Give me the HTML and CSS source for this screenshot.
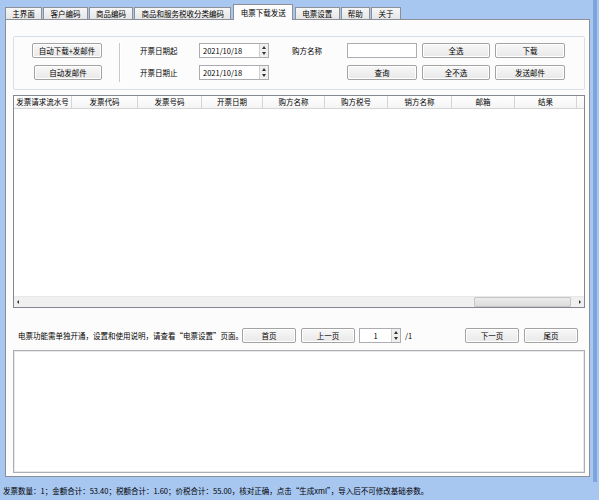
FILE: index.html
```html
<!DOCTYPE html>
<html lang="zh-CN">
<head>
<meta charset="utf-8">
<title>电票下载发送</title>
<link rel="stylesheet" href="styles.css">
</head>
<body>
<div class="window">
  <div class="top">
    <div class="left">
      <div class="tabs">
        <div class="tab">主界面</div>
        <div class="tab">客户编码</div>
        <div class="tab">商品编码</div>
        <div class="tab">商品和服务税收分类编码</div>
        <div class="tab active">电票下载发送</div>
        <div class="tab">电票设置</div>
        <div class="tab">帮助</div>
        <div class="tab">关于</div>
      </div>
      <div class="panel">
        <div class="group">
          <div class="col-auto">
            <div class="btn w70">自动下载+发邮件</div>
            <div class="btn w68">自动发邮件</div>
          </div>
          <div class="vsep"></div>
          <div class="dates">
            <div class="lbl">开票日期起</div>
            <div class="input date"><span>2021/10/18</span><div class="spin"><i class="up"></i><i class="down"></i></div></div>
            <div class="lbl">开票日期止</div>
            <div class="input date"><span>2021/10/18</span><div class="spin"><i class="up"></i><i class="down"></i></div></div>
          </div>
          <div class="buyer">
            <div class="lbl">购方名称</div>
            <div class="input"></div>
            <div class="btn">全选</div>
            <div class="btn">下载</div>
            <div></div>
            <div class="btn">查询</div>
            <div class="btn">全不选</div>
            <div class="btn">发送邮件</div>
          </div>
        </div>
        <div class="table">
          <div class="thead">
            <div class="th c1">发票请求流水号</div>
            <div class="th c2">发票代码</div>
            <div class="th c3">发票号码</div>
            <div class="th c4">开票日期</div>
            <div class="th c5">购方名称</div>
            <div class="th c6">购方税号</div>
            <div class="th c7">销方名称</div>
            <div class="th c8">邮箱</div>
            <div class="th c9">结果</div>
          </div>
          <div class="tbody"></div>
          <div class="hscroll">
            <div class="arrow"><i class="tri-left"></i></div>
            <div class="track"><div class="thumb"></div></div>
            <div class="arrow"><i class="tri-right"></i></div>
          </div>
        </div>
        <div class="pager">
          <div class="note">电票功能需单独开通，设置和使用说明，请查看“电票设置”页面。</div>
          <div class="btn pbtn first">首页</div>
          <div class="btn pbtn">上一页</div>
          <div class="input pagenum"><span>1</span><div class="spin"><i class="up"></i><i class="down"></i></div></div>
          <div class="total">/1</div>
          <div class="btn pbtn next">下一页</div>
          <div class="btn pbtn">尾页</div>
        </div>
        <div class="textarea"></div>
      </div>
    </div>
    <div class="stripe"></div>
  </div>
  <div class="status">发票数量：1；金额合计：53.40；税额合计：1.60；价税合计：55.00，核对正确，点击“生成xml”，导入后不可修改基础参数。</div>
</div>
</body>
</html>
```

FILE: styles.css
```css
* { box-sizing: border-box; }
html, body { margin: 0; padding: 0; }
body {
  font-family: "Noto Sans CJK SC", "Noto Sans", sans-serif;
  font-size: 7.5px;
  color: #000;
}
.window {
  width: 599px;
  height: 500px;
  background: #a7c6f0;
  display: flex;
  flex-direction: column;
}
.top {
  height: 482px;
  display: flex;
}
.left {
  flex: 1;
  padding-left: 5px;
  display: flex;
  flex-direction: column;
}
.stripe {
  width: 4px;
  margin: 0 2px 0 3px;
  background: #7ea4db;
}
.tabs {
  height: 19px;
  padding-top: 4px;
  display: flex;
  align-items: flex-end;
  gap: 1px;
}
.tab {
  height: 12px;
  padding: 0 6.3px;
  border: 1px solid #8c8f96;
  border-bottom: none;
  background: linear-gradient(#f6f6f6, #e6e6e6);
  display: flex;
  align-items: center;
  justify-content: center;
  white-space: nowrap;
  line-height: 1;
}
.tab.active {
  height: 16px;
  margin: 0 1px -1px 1px;
  background: #fcfcfc;
  position: relative;
  z-index: 1;
}
.panel {
  width: 585px;
  height: 458px;
  border: 1px solid #8c8f96;
  background: #fcfcfc;
  padding: 16px 0 0 7px;
}
.group {
  width: 572px;
  height: 54px;
  border: 1px solid #d9dfe6;
  border-radius: 2px;
  display: flex;
  align-items: flex-start;
  padding: 6px 0 0 18px;
}
.col-auto {
  width: 70px;
  display: flex;
  flex-direction: column;
  align-items: flex-end;
  gap: 7px;
}
.btn {
  height: 15px;
  border: 1px solid #a3a3a3;
  border-radius: 2px;
  box-shadow: inset 0 0 0 1px #ffffff;
  background: linear-gradient(#f7f7f7, #e9e9e9);
  display: flex;
  align-items: center;
  justify-content: center;
  white-space: nowrap;
  line-height: 1;
}
.w70 { width: 70px; }
.w68 { width: 68px; }
.vsep {
  width: 2px;
  height: 39px;
  margin-left: 17px;
  border-left: 1px solid #c8c8c8;
  border-right: 1px solid #ffffff;
}
.dates {
  margin-left: 19px;
  display: grid;
  grid-template-columns: 59px 70px;
  grid-auto-rows: 15px;
  row-gap: 7px;
}
.lbl {
  display: flex;
  align-items: center;
  white-space: nowrap;
  line-height: 1;
}
.input {
  height: 15px;
  border: 1px solid #abadb3;
  background: #ffffff;
  display: flex;
  align-items: center;
  line-height: 1;
}
.date span { flex: 1; padding-left: 3px; }
.spin {
  width: 9px;
  height: 13px;
  border-left: 1px solid #d0d0d0;
  background: #f0f0f0;
  display: flex;
  flex-direction: column;
  align-items: center;
  justify-content: space-around;
  padding: 1px 0;
}
.spin i {
  width: 0;
  height: 0;
  border-left: 2px solid transparent;
  border-right: 2px solid transparent;
}
.spin .up { border-bottom: 3px solid #333; }
.spin .down { border-top: 3px solid #333; }
.buyer {
  margin-left: 23px;
  display: grid;
  grid-template-columns: 50px 70px 68px 70px;
  grid-auto-rows: 15px;
  column-gap: 5px;
  row-gap: 7px;
}
.table {
  margin-top: 5px;
  width: 572px;
  height: 213px;
  border: 1px solid #828790;
  background: #ffffff;
  display: flex;
  flex-direction: column;
}
.thead {
  height: 13px;
  display: flex;
  border-bottom: 1px solid #d5d5d5;
  background: linear-gradient(#ffffff, #f4f4f4);
}
.th {
  border-right: 1px solid #d5d5d5;
  display: flex;
  align-items: center;
  justify-content: center;
  white-space: nowrap;
  line-height: 1;
}
.c1 { width: 58px; }
.c2 { width: 66px; }
.c3 { width: 64px; }
.c4 { width: 61px; }
.c5 { width: 62px; }
.c6 { width: 63px; }
.c7 { width: 64px; }
.c8 { width: 63px; }
.c9 { width: 62px; }
.tbody { flex: 1; }
.hscroll {
  height: 11px;
  display: flex;
  background: #f0f0f0;
  border-top: 1px solid #e8e8e8;
}
.arrow {
  width: 8px;
  display: flex;
  align-items: center;
  justify-content: center;
}
.tri-left, .tri-right {
  width: 0;
  height: 0;
  border-top: 2px solid transparent;
  border-bottom: 2px solid transparent;
}
.tri-left { border-right: 2px solid #333; }
.tri-right { border-left: 2px solid #333; }
.track {
  flex: 1;
  padding-left: 452px;
  padding-right: 5px;
  display: flex;
}
.thumb {
  flex: 1;
  background: linear-gradient(#ececec, #dcdcdc);
  border: 1px solid #c6c6c6;
  border-radius: 1px;
}
.pager {
  margin-top: 20px;
  width: 572px;
  height: 15px;
  display: flex;
  align-items: center;
}
.note {
  width: 229px;
  padding-left: 5px;
  white-space: nowrap;
  line-height: 1;
}
.pbtn { width: 54px; margin-right: 5px; }
.pagenum {
  width: 42px;
  margin-left: -1px;
}
.pagenum span { flex: 1; text-align: center; }
.total {
  width: 64px;
  padding-left: 4px;
  line-height: 1;
}
.textarea {
  margin-top: 7px;
  width: 572px;
  height: 123px;
  border: 1px solid #abadb3;
  box-shadow: inset 0 0 0 1px #e8e8e8;
  background: #ffffff;
}
.status {
  flex: 1;
  padding-left: 3px;
  display: flex;
  align-items: center;
  white-space: nowrap;
  line-height: 1;
}
```
